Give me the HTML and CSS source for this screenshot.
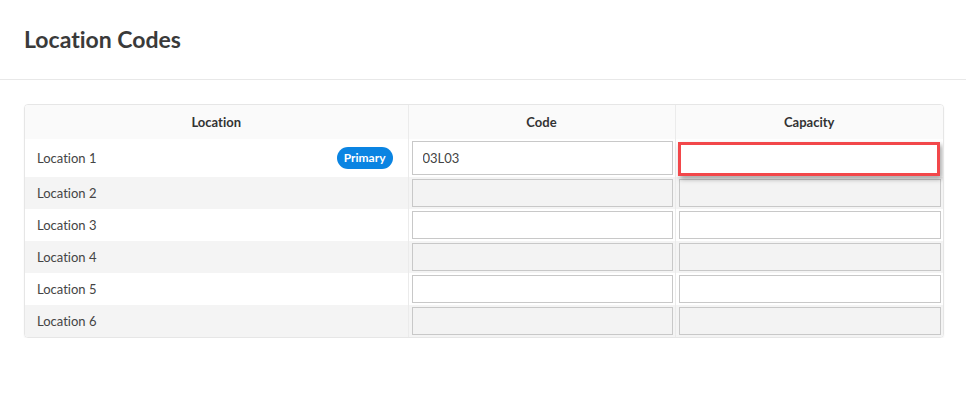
FILE: index.html
```html
<!DOCTYPE html>
<html>
<head>
    <title>Location Codes</title>
    <link rel="stylesheet" href="styles.css">
</head>
<body>
    <div class="page-header">
        <h1>Location Codes</h1>
    </div>
    <div class="content">
        <div class="grid-wrap">
            <table class="loc-table">
                <colgroup>
                    <col class="col-loc">
                    <col class="col-code">
                    <col class="col-cap">
                </colgroup>
                <thead>
                    <tr>
                        <th>Location</th>
                        <th>Code</th>
                        <th>Capacity</th>
                    </tr>
                </thead>
                <tbody>
                    <tr class="first">
                        <td class="name">
                            <div class="name-inner">
                                <span>Location 1</span>
                                <span class="badge">Primary</span>
                            </div>
                        </td>
                        <td class="field"><input type="text" value="03L03"></td>
                        <td class="field"><input type="text" class="invalid"></td>
                    </tr>
                    <tr class="alt">
                        <td class="name">Location 2</td>
                        <td class="field"><input type="text"></td>
                        <td class="field"><input type="text"></td>
                    </tr>
                    <tr>
                        <td class="name">Location 3</td>
                        <td class="field"><input type="text"></td>
                        <td class="field"><input type="text"></td>
                    </tr>
                    <tr class="alt">
                        <td class="name">Location 4</td>
                        <td class="field"><input type="text"></td>
                        <td class="field"><input type="text"></td>
                    </tr>
                    <tr>
                        <td class="name">Location 5</td>
                        <td class="field"><input type="text"></td>
                        <td class="field"><input type="text"></td>
                    </tr>
                    <tr class="alt">
                        <td class="name">Location 6</td>
                        <td class="field"><input type="text"></td>
                        <td class="field"><input type="text"></td>
                    </tr>
                </tbody>
            </table>
        </div>
    </div>
</body>
</html>
```

FILE: styles.css
```css
body {
    margin: 0;
    background: #fff;
    font-family: "Source Sans Pro", Lato, "Liberation Sans", sans-serif;
    font-variant-ligatures: none;
    color: #444;
}

.page-header {
    padding: 0 24px;
    height: 79px;
    border-bottom: 1px solid #e8e8e8;
    display: flex;
    align-items: center;
}

.page-header h1 {
    margin: 0;
    font-size: 23px;
    font-weight: 700;
    color: #3a3a3a;
    padding-bottom: 2px;
}

.content {
    padding: 24px 24px 0 24px;
}

.grid-wrap {
    width: 918px;
    border: 1px solid #e6e6e6;
    border-radius: 4px;
    overflow: hidden;
    box-shadow: 0 1px 2px rgba(0, 0, 0, 0.06);
}

.loc-table {
    width: 100%;
    border-collapse: collapse;
    table-layout: fixed;
    font-size: 13px;
}

.col-loc {
    width: 383px;
}

.col-code {
    width: 267px;
}

.loc-table th {
    height: 34px;
    padding: 0;
    background: #fafafa;
    color: #333;
    font-weight: 700;
    text-align: center;
    border-left: 1px solid #ebebeb;
}

.loc-table th:first-child,
.loc-table td:first-child {
    border-left: none;
}

.loc-table td {
    padding: 2px 2px 2px 3px;
    height: 28px;
    border-left: 1px solid #ebebeb;
}

.loc-table tr.first td {
    height: 34px;
}

.loc-table tr.alt td {
    background: #f4f4f4;
}

.loc-table td.name {
    padding: 0 15px 1px 12px;
    color: #444;
}

.name-inner {
    display: flex;
    align-items: center;
    justify-content: space-between;
}

.badge {
    background: #0a84e2;
    color: #fff;
    font-size: 12px;
    font-weight: 700;
    height: 22px;
    line-height: 22px;
    padding: 0 7px;
    border-radius: 11px;
}

.field input {
    display: block;
    box-sizing: border-box;
    width: 100%;
    height: 28px;
    margin: 0;
    padding: 0 10px;
    border: 1px solid #c8c8c8;
    background: #fff;
    font-family: inherit;
    font-size: 13px;
    color: #444;
    outline: none;
}

.alt .field input {
    background: #f3f3f3;
}

.first .field input {
    height: 34px;
}

.field input.invalid {
    border: 3px solid #f2474a;
    box-shadow: 2px 3px 5px rgba(0, 0, 0, 0.35);
    transform: translate(-1px, 1px);
}
```
